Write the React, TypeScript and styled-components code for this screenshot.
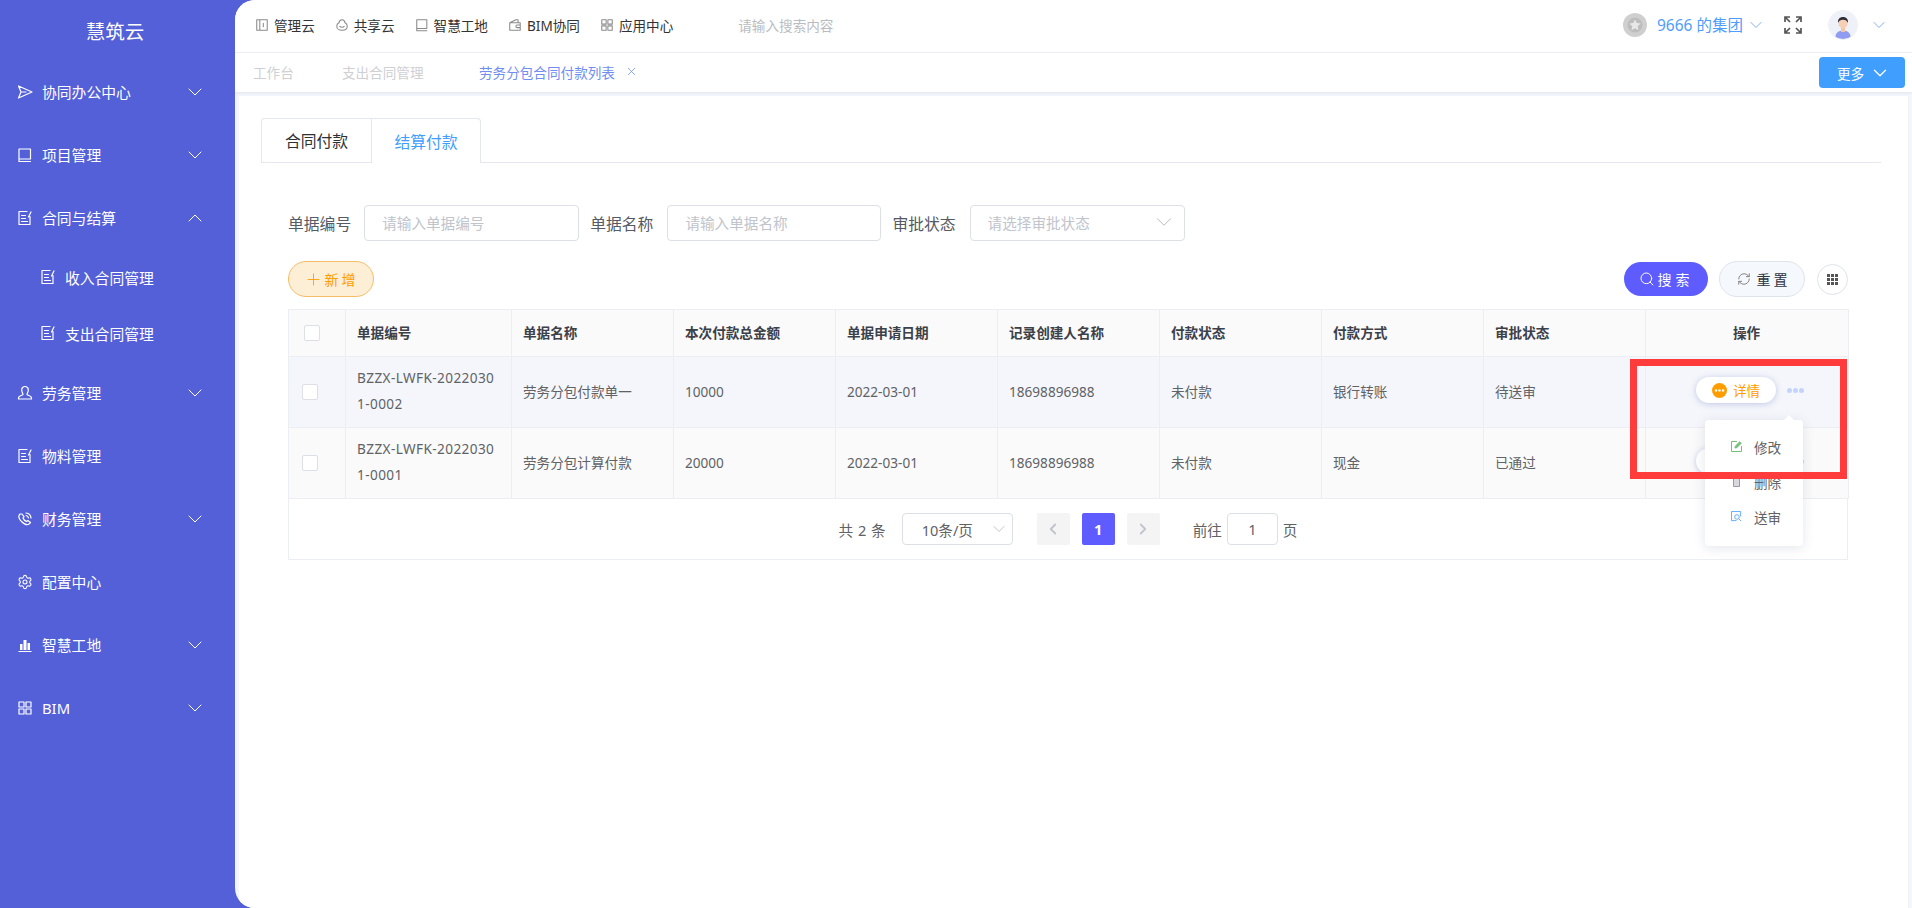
import React from 'react';
import styled, {createGlobalStyle} from 'styled-components';
import {ChevronDown, ChevronLeft, ChevronRight, ChevronUp, Plus, RefreshCw, Search, Settings, X} from 'lucide-react';

const FONT = '"Noto Sans", "Noto Sans CJK SC", sans-serif';

const GlobalStyle = createGlobalStyle`
  html, body { margin: 0; padding: 0; height: 100%; }
  body { font-family: ${FONT}; background: #5460d8; overflow: hidden; }
  * { box-sizing: border-box; }
`;

const Ico: React.FC<{d: string; size?: number; color?: string}> = ({d, size = 16, color = 'currentColor'}) => (
  <svg width={size} height={size} viewBox="0 0 16 16" fill="none" stroke={color} strokeWidth="1.2" strokeLinejoin="round" strokeLinecap="round">
    <path d={d} />
  </svg>
);

const PATHS = {
  send: 'M1.500 2 15 8 1.500 14 4 8ZM4 8h5',
  book: 'M2 2h11.500v10H2ZM2 12v2.500h11.500',
  doc: 'M13 6.500V14.500H2V1.500h8M4.500 5.500h4M4.500 8.500h4M4.500 11.500h6M14 2l-2.500 5',
  user: 'M8 1.500a3.300 3.300 0 0 1 3.300 3.500c0 2-1.300 3.500-1.300 4.500 0 .8 4.500 1 4.500 3.500v1H1.500v-1c0-2.500 4.500-2.700 4.500-3.500 0-1-1.300-2.500-1.300-4.500A3.300 3.300 0 0 1 8 1.500Z',
  phone: 'M3 3c-2 2-1 5 1.500 7.500S10 14.500 12 13l1.500-1.500-2.700-2-1.300 1c-1.500-.6-3-2-3.500-3.500l1-1.300-2-2.700ZM9 2a5.500 5.500 0 0 1 5 5M9 4.500A3 3 0 0 1 11.500 7',
  grid: 'M2 2h5v5H2ZM9 2h5v5H9ZM2 9h5v5H2ZM9 9h5v5H9Z',
  panel: 'M2 2h12v12H2ZM5.500 2v12M9.500 6v4',
  cloud: 'M8 2c2 0 3.200 1.500 3.500 3.500 1.500.8 2.500 2.200 2.500 3.800C14 12 11.500 14 8 14s-6-2-6-4.700c0-1.600 1-3 2.500-3.800C4.800 3.500 6 2 8 2ZM5.500 9.500c1 1.300 4 1.300 5 0',
  wallet: 'M2 5.500 9 2h2.500v3.500M2 5.500V14h12V5.500ZM14 8h-3.500a1.500 1.500 0 0 0 0 3H14',
};

const Down = () => <ChevronDown size={24} strokeWidth={1} />;

const App: React.FC = () => (
  <Shell>
    <GlobalStyle />
    <Sidebar>
      <Brand>慧筑云</Brand>
      <MenuItem><MenuIcon><Ico d={PATHS.send} /></MenuIcon>协同办公中心<MenuArrow><Down /></MenuArrow></MenuItem>
      <MenuItem><MenuIcon><Ico d={PATHS.book} /></MenuIcon>项目管理<MenuArrow><Down /></MenuArrow></MenuItem>
      <MenuItem><MenuIcon><Ico d={PATHS.doc} /></MenuIcon>合同与结算<MenuArrow><ChevronUp size={24} strokeWidth={1} /></MenuArrow></MenuItem>
      <SubItem><MenuIcon><Ico d={PATHS.doc} /></MenuIcon>收入合同管理</SubItem>
      <SubItem><MenuIcon><Ico d={PATHS.doc} /></MenuIcon>支出合同管理</SubItem>
      <MenuItem><MenuIcon><Ico d={PATHS.user} /></MenuIcon>劳务管理<MenuArrow><Down /></MenuArrow></MenuItem>
      <MenuItem><MenuIcon><Ico d={PATHS.doc} /></MenuIcon>物料管理</MenuItem>
      <MenuItem><MenuIcon><Ico d={PATHS.phone} /></MenuIcon>财务管理<MenuArrow><Down /></MenuArrow></MenuItem>
      <MenuItem><MenuIcon><Settings size={16} strokeWidth={1.6} /></MenuIcon>配置中心</MenuItem>
      <MenuItem>
        <MenuIcon>
          <svg width="16" height="16" viewBox="0 0 16 16" fill="#fff"><path d="M3 7h2.500v6H3ZM6.500 3h3v10h-3ZM10.500 6H13v7h-2.500ZM1.500 14h13v1h-13Z" /></svg>
        </MenuIcon>
        智慧工地<MenuArrow><Down /></MenuArrow>
      </MenuItem>
      <MenuItem><MenuIcon><Ico d={PATHS.grid} /></MenuIcon>BIM<MenuArrow><Down /></MenuArrow></MenuItem>
    </Sidebar>

    <Main>
      <TopBar>
        <TopNav>
          <TopLink><Ico d={PATHS.panel} size={14} color="#8a8a8a" />管理云</TopLink>
          <TopLink><Ico d={PATHS.cloud} size={14} color="#8a8a8a" />共享云</TopLink>
          <TopLink><Ico d={PATHS.book} size={14} color="#8a8a8a" />智慧工地</TopLink>
          <TopLink><Ico d={PATHS.wallet} size={14} color="#8a8a8a" />BIM协同</TopLink>
          <TopLink><Ico d={PATHS.grid} size={14} color="#8a8a8a" />应用中心</TopLink>
        </TopNav>
        <TopSearch>请输入搜索内容</TopSearch>
        <TopRight>
          <Medal>
            <svg width="24" height="24" viewBox="0 0 24 24">
              <circle cx="12" cy="12" r="12" fill="#cfcfcf" />
              <circle cx="12" cy="12" r="7.500" fill="#bdbdbd" />
              <path d="m12 6.500 1.700 3.600 3.900.5-2.900 2.700.8 3.900-3.500-2-3.500 2 .8-3.900-2.900-2.700 3.900-.5Z" fill="#e8e8e8" />
            </svg>
          </Medal>
          <OrgName>9666 的集团</OrgName>
          <SoftArrow $gap={3}><ChevronDown size={20} strokeWidth={1} /></SoftArrow>
          <Expand>
            <svg width="18" height="18" viewBox="0 0 18 18" fill="none" stroke="#555" strokeWidth="1.700">
              <path d="M1 6V1h5M1 1l5 5M17 6V1h-5M17 1l-5 5M1 12v5h5M1 17l5-5M17 12v5h-5M17 17l-5-5" />
            </svg>
          </Expand>
          <Avatar>
            <svg width="28" height="28" viewBox="0 0 28 28">
              <circle cx="14" cy="14" r="14" fill="#eef1f8" />
              <path d="M6.500 26c0-4 3-6.500 7.500-6.500s7.500 2.500 7.500 6.500c-2 1.300-4.500 2-7.500 2s-5.500-.7-7.500-2Z" fill="#8f9cf2" />
              <rect x="12" y="15" width="4" height="6" fill="#f3c6a8" />
              <ellipse cx="14" cy="12.500" rx="4.500" ry="5" fill="#f6cfb4" />
              <path d="M9 12c-.5-4 2-6 5-6s5.500 2 5 6c-1-2.500-2.500-3.200-5-3.200S10 9.500 9 12Z" fill="#2f2f35" />
            </svg>
          </Avatar>
          <SoftArrow $gap={11}><ChevronDown size={20} strokeWidth={1} /></SoftArrow>
        </TopRight>
      </TopBar>

      <TabBar>
        <PageTab $w={89}>工作台</PageTab>
        <PageTab $w={137}>支出合同管理</PageTab>
        <PageTab $active>劳务分包合同付款列表<X size={13} strokeWidth={1.4} /></PageTab>
        <MoreButton>更多<ChevronDown size={22} strokeWidth={1.4} /></MoreButton>
      </TabBar>

      <Card>
        <Tabs>
          <TabItem>合同付款</TabItem>
          <TabItem $active>结算付款</TabItem>
        </Tabs>
        <Body>
          <Filters>
            <FilterLabel>单据编号</FilterLabel>
            <Field $w={215}>请输入单据编号</Field>
            <FilterLabel>单据名称</FilterLabel>
            <Field $w={214}>请输入单据名称</Field>
            <FilterLabel>审批状态</FilterLabel>
            <Field $w={215}>请选择审批状态<FieldArrow><ChevronDown size={26} strokeWidth={0.9} /></FieldArrow></Field>
          </Filters>

          <Actions>
            <AddButton><Plus size={19} strokeWidth={1.1} />新增</AddButton>
            <ActionsRight>
              <SearchButton><Search size={16} strokeWidth={1.5} />搜索</SearchButton>
              <ResetButton><RefreshCw size={14} strokeWidth={1.5} color="#777" />重置</ResetButton>
              <GridButton>
                <svg width="11" height="11" viewBox="0 0 11 11" fill="#555">
                  <path d="M0 0h3v3H0ZM4 0h3v3H4ZM8 0h3v3H8ZM0 4h3v3H0ZM4 4h3v3H4ZM8 4h3v3H8ZM0 8h3v3H0ZM4 8h3v3H4ZM8 8h3v3H8Z" />
                </svg>
              </GridButton>
            </ActionsRight>
          </Actions>

          <TableWrap>
            <Table>
              <colgroup>
                <col style={{width: 57}} />
                <col style={{width: 166}} />
                <col style={{width: 162}} />
                <col style={{width: 162}} />
                <col style={{width: 162}} />
                <col style={{width: 162}} />
                <col style={{width: 162}} />
                <col style={{width: 162}} />
                <col style={{width: 162}} />
                <col style={{width: 203}} />
              </colgroup>
              <thead>
                <tr>
                  <Th><Check $head /></Th>
                  <Th>单据编号</Th>
                  <Th>单据名称</Th>
                  <Th>本次付款总金额</Th>
                  <Th>单据申请日期</Th>
                  <Th>记录创建人名称</Th>
                  <Th>付款状态</Th>
                  <Th>付款方式</Th>
                  <Th>审批状态</Th>
                  <Th $center>操作</Th>
                </tr>
              </thead>
              <tbody>
                {ROWS.map((r, i) => (
                  <tr key={r.no}>
                    <Td $alt={i === 0}><Check /></Td>
                    <Td $alt={i === 0}><Code>{r.no}</Code></Td>
                    <Td $alt={i === 0}>{r.name}</Td>
                    <Td $alt={i === 0}>{r.amount}</Td>
                    <Td $alt={i === 0}>2022-03-01</Td>
                    <Td $alt={i === 0}>18698896988</Td>
                    <Td $alt={i === 0}>未付款</Td>
                    <Td $alt={i === 0}>{r.way}</Td>
                    <Td $alt={i === 0}>{r.status}</Td>
                    <Td $alt={i === 0}>
                      <OpCell>
                        <DetailPill>
                          <svg width="15" height="15" viewBox="0 0 15 15">
                            <circle cx="7.500" cy="7.500" r="7.500" fill="#ff9d00" />
                            <circle cx="4" cy="7.500" r="1.200" fill="#fff" />
                            <circle cx="7.500" cy="7.500" r="1.200" fill="#fff" />
                            <circle cx="11" cy="7.500" r="1.200" fill="#fff" />
                          </svg>
                          详情
                        </DetailPill>
                        <MoreDots><i /><i /><i /></MoreDots>
                      </OpCell>
                    </Td>
                  </tr>
                ))}
              </tbody>
            </Table>

            <Pager>
              <PagerText>共 2 条</PagerText>
              <PageSize>10条/页<FieldArrow><ChevronDown size={20} strokeWidth={1} /></FieldArrow></PageSize>
              <PageBtn $ml={24}><ChevronLeft size={18} strokeWidth={2.4} /></PageBtn>
              <PageBtn $ml={12} $active>1</PageBtn>
              <PageBtn $ml={12}><ChevronRight size={18} strokeWidth={2.4} /></PageBtn>
              <PagerGoto>前往</PagerGoto>
              <PageInput>1</PageInput>
              <PagerUnit>页</PagerUnit>
            </Pager>

            <Popup>
              <PopItem>
                <svg width="11" height="11" viewBox="0 0 11 11" fill="none" stroke="#74be7a" strokeWidth="1">
                  <path d="M6 .5H.5v10h10V5" /><path d="m4 7 .3-1.800L8.800.8l1.400 1.400-4.400 4.500Z" fill="#74be7a" />
                </svg>
                修改
              </PopItem>
              <PopItem>
                <svg width="11" height="11" viewBox="0 0 11 11" fill="none" stroke="#9a9aa5" strokeWidth="1">
                  <path d="M2.500 2.500h6v8h-6Z" fill="#d8d8de" /><path d="M1 1.500h9" />
                </svg>
                删除
              </PopItem>
              <PopItem>
                <svg width="11" height="11" viewBox="0 0 12 12" fill="none" stroke="#5aa5f5" strokeWidth="1">
                  <path d="M.5.500h10V6M.5.500v10H6" /><circle cx="6.500" cy="6.500" r="2.500" /><path d="m8.500 8.500 2.500 2.500" />
                </svg>
                送审
              </PopItem>
            </Popup>
            <Highlight />
          </TableWrap>
        </Body>
      </Card>
    </Main>
  </Shell>
);

export default App;

const ROWS = [
  {no: 'BZZX-LWFK-20220301-0002', name: '劳务分包付款单一', amount: '10000', way: '银行转账', status: '待送审'},
  {no: 'BZZX-LWFK-20220301-0001', name: '劳务分包计算付款', amount: '20000', way: '现金', status: '已通过'},
];

const Shell = styled.div`
  display: flex;
  height: 908px;
  width: 1912px;
  background: #5460d8;
`;

const Sidebar = styled.aside`
  width: 235px;
  flex: none;
  color: #fff;
`;

const Brand = styled.div`
  height: 60px;
  padding: 1px 5px 0 0;
  display: flex;
  align-items: center;
  justify-content: center;
  font-size: 19.500px;
`;

const MenuItem = styled.div`
  height: 63px;
  display: flex;
  align-items: center;
  padding: 0 28px 0 17px;
  font-size: 14.800px;
`;

const SubItem = styled(MenuItem)`
  height: 56px;
  padding-left: 40px;
`;

const MenuIcon = styled.span`
  width: 16px;
  height: 16px;
  margin-right: 9px;
  display: inline-flex;
  align-items: center;
  justify-content: center;
`;

const MenuArrow = styled.span`
  margin-left: auto;
  display: inline-flex;
`;

const Main = styled.main`
  flex: 1;
  min-width: 0;
  display: flex;
  flex-direction: column;
  background: #f3f6fc;
  border-radius: 20px 0 0 20px;
  overflow: hidden;
`;

const TopBar = styled.header`
  height: 53px;
  flex: none;
  display: flex;
  align-items: center;
  background: #fff;
  border-bottom: 1px solid #f0f1f4;
  padding: 0 23px 3px 20px;
`;

const TopNav = styled.nav`
  display: flex;
  gap: 20px;
`;

const TopLink = styled.span`
  display: inline-flex;
  align-items: center;
  gap: 5px;
  font-size: 13.600px;
  color: #333;
`;

const TopSearch = styled.span`
  margin-left: 65px;
  font-size: 13.600px;
  color: #b9bcc2;
`;

const TopRight = styled.div`
  margin-left: auto;
  display: flex;
  align-items: center;
`;

const Medal = styled.span`
  display: inline-flex;
  margin-right: 10px;
`;

const OrgName = styled.span`
  font-size: 15.500px;
  color: #4e9dfb;
`;

const SoftArrow = styled.span<{$gap: number}>`
  display: inline-flex;
  margin-left: ${p => p.$gap}px;
  color: #6c9df0;
`;

const Expand = styled.span`
  display: inline-flex;
  margin: 0 26px 0 18px;
`;

const Avatar = styled.span`
  width: 30px;
  height: 30px;
  border-radius: 50%;
  border: 1px solid #eceef2;
  display: inline-flex;
  overflow: hidden;
`;

const TabBar = styled.div`
  height: 39px;
  flex: none;
  display: flex;
  align-items: center;
  background: #fff;
  padding: 0 7px 0 18px;
  box-shadow: 0 1px 3px rgba(0, 0, 0, 0.08);
  position: relative;
`;

const PageTab = styled.span<{$w?: number; $active?: boolean}>`
  width: ${p => (p.$w ? `${p.$w}px` : 'auto')};
  flex: none;
  padding-bottom: 2px;
  font-size: 13.600px;
  color: ${p => (p.$active ? '#6f8ef0' : '#cfd0d4')};
  display: inline-flex;
  align-items: center;
  gap: 10px;
`;

const MoreButton = styled.button`
  margin-left: auto;
  width: 86px;
  height: 31px;
  border: 0;
  border-radius: 4px;
  background: #409eff;
  color: #fff;
  font: 13.600px ${FONT};
  display: flex;
  align-items: center;
  justify-content: center;
  gap: 5px;
  padding: 0 0 0 4px;
`;

const Card = styled.section`
  flex: 1;
  min-height: 0;
  margin: 4px 3px 0 4px;
  padding: 22px 27px 0 22px;
  background: #fff;
  border-right: 1px solid #f0f1f5;
`;

const Tabs = styled.div`
  display: flex;
  height: 45px;
  border-bottom: 1px solid #e4e7ed;
`;

const TabItem = styled.div<{$active?: boolean}>`
  width: ${p => (p.$active ? '109px' : '111px')};
  height: ${p => (p.$active ? '45px' : '44px')};
  display: flex;
  align-items: center;
  justify-content: center;
  font-size: 15.800px;
  color: ${p => (p.$active ? '#409eff' : '#303133')};
  border: 1px solid #e4e7ed;
  border-bottom: 0;
  border-left-width: ${p => (p.$active ? 0 : '1px')};
  border-radius: ${p => (p.$active ? '0 4px 0 0' : '4px 0 0 0')};
  background: #fff;
  position: relative;
`;

const Body = styled.div`
  padding: 42px 33px 0 27px;
`;

const Filters = styled.div`
  display: flex;
  align-items: center;
  height: 36px;
`;

const FilterLabel = styled.span`
  font-size: 15.800px;
  color: #555a64;
  margin-right: 13px;
  & ~ & { margin: 0 14px 0 11px; }
`;

const Field = styled.div<{$w: number}>`
  width: ${p => p.$w}px;
  height: 36px;
  padding: 0 18px 2px 17px;
  display: flex;
  align-items: center;
  justify-content: space-between;
  border: 1px solid #dcdfe6;
  border-radius: 4px;
  background: #fff;
  font-size: 14.600px;
  color: #c0c4cc;
`;

const FieldArrow = styled.span`
  display: inline-flex;
  color: #b4b8c2;
  margin-right: -11px;
`;

const Actions = styled.div`
  display: flex;
  align-items: center;
  height: 36px;
  margin-top: 20px;
`;

const AddButton = styled.button`
  width: 86px;
  height: 36px;
  border-radius: 18px;
  border: 1px solid #f6bd67;
  background: #fdeed6;
  color: #ff9d00;
  font: 14px ${FONT};
  letter-spacing: 3px;
  display: flex;
  align-items: center;
  justify-content: center;
  gap: 2px;
  padding: 0;
`;

const ActionsRight = styled.div`
  margin-left: auto;
  display: flex;
  align-items: center;
`;

const SearchButton = styled.button`
  width: 84px;
  height: 34px;
  border: 0;
  border-radius: 17px;
  background: #5e5cff;
  color: #fff;
  font: 14px ${FONT};
  letter-spacing: 4px;
  display: flex;
  align-items: center;
  justify-content: center;
  gap: 3px;
  padding: 0 0 1px;
`;

const ResetButton = styled.button`
  width: 86px;
  height: 36px;
  margin-left: 11px;
  border: 1px solid #dfe3ec;
  border-radius: 18px;
  background: #f5f8fd;
  color: #2f3440;
  font: 14px ${FONT};
  letter-spacing: 3px;
  display: flex;
  align-items: center;
  justify-content: center;
  gap: 6px;
  padding: 0 0 1px 3px;
`;

const GridButton = styled.button`
  width: 31px;
  height: 31px;
  margin-left: 12px;
  border: 1px solid #dfe3ec;
  border-radius: 50%;
  background: #fff;
  display: flex;
  align-items: center;
  justify-content: center;
  padding: 0;
`;

const TableWrap = styled.div`
  position: relative;
  margin-top: 12px;
  width: 1560px;
`;

const Table = styled.table`
  width: 1560px;
  table-layout: fixed;
  border-collapse: collapse;
  font-size: 13.600px;
`;

const Th = styled.th<{$center?: boolean}>`
  height: 47px;
  padding: 0 12px 2px 11px;
  background: #fafafa;
  border: 1px solid #ebeef3;
  text-align: ${p => (p.$center ? 'center' : 'left')};
  font-weight: 600;
  color: #3c4048;
  position: relative;
`;

const Td = styled.td<{$alt?: boolean}>`
  height: 71px;
  padding: 0 12px 2px 11px;
  background: ${p => (p.$alt ? '#f5f6fb' : '#fafafa')};
  border: 1px solid #ebeef3;
  color: #606266;
`;

const Check = styled.span<{$head?: boolean}>`
  display: block;
  width: 16px;
  height: 16px;
  margin: 2px 0 0 ${p => (p.$head ? '4px' : '2px')};
  background: #fff;
  border: 1px solid #dcdfe6;
  border-radius: 2px;
`;

const Code = styled.div`
  line-height: 26px;
  word-break: break-all;
  letter-spacing: 0.4px;
  width: 140px;
`;

const OpCell = styled.div`
  display: flex;
  align-items: center;
  padding-left: 39px;
  margin-top: -2px;
`;

const DetailPill = styled.span`
  width: 80px;
  height: 26px;
  flex: none;
  border-radius: 13px;
  background: #fff;
  box-shadow: 0 1px 6px rgba(90, 110, 190, 0.35);
  color: #ff9d00;
  font-size: 13.600px;
  display: flex;
  align-items: center;
  justify-content: center;
  gap: 6px;
`;

const MoreDots = styled.span`
  display: flex;
  gap: 1px;
  margin-left: 11px;
  i { width: 5px; height: 5px; border-radius: 50%; background: #c3d4fb; }
`;

const Pager = styled.div`
  height: 61px;
  display: flex;
  align-items: center;
  justify-content: center;
  border: 1px solid #ebeef3;
  border-top: 0;
  font-size: 14.600px;
  color: #606266;
`;

const PagerText = styled.span`
  margin-right: 16px;
  word-spacing: 1px;
`;

const PageSize = styled.div`
  width: 111px;
  height: 32px;
  padding: 0 14px 0 19px;
  display: flex;
  align-items: center;
  justify-content: space-between;
  border: 1px solid #dcdfe6;
  border-radius: 4px;
`;

const PageBtn = styled.span<{$ml: number; $active?: boolean}>`
  width: 33px;
  height: 32px;
  margin-left: ${p => p.$ml}px;
  display: flex;
  align-items: center;
  justify-content: center;
  border-radius: 2px;
  font-weight: 700;
  background: ${p => (p.$active ? '#5e5cff' : '#f4f4f5')};
  color: ${p => (p.$active ? '#fff' : '#c0c4cc')};
`;

const PagerGoto = styled.span`
  margin-left: 33px;
`;

const PageInput = styled.div`
  width: 51px;
  height: 32px;
  margin: 0 5px;
  display: flex;
  align-items: center;
  justify-content: center;
  border: 1px solid #dcdfe6;
  border-radius: 4px;
`;

const PagerUnit = styled.span``;

const Popup = styled.div`
  position: absolute;
  left: 1417px;
  top: 111px;
  width: 98px;
  height: 126px;
  padding: 9px 0 0 26px;
  background: #fff;
  border-radius: 4px;
  box-shadow: 0 2px 12px rgba(60, 70, 110, 0.14);
  &::before {
    content: '';
    position: absolute;
    left: 79px;
    top: -5px;
    width: 0;
    height: 0;
    border: 5px solid transparent;
    border-top: 0;
    border-bottom-color: #fff;
  }
`;

const PopItem = styled.div`
  height: 35px;
  display: flex;
  align-items: center;
  gap: 12px;
  font-size: 13.600px;
  color: #606266;
`;

const Highlight = styled.div`
  position: absolute;
  left: 1342px;
  top: 50px;
  width: 217px;
  height: 120px;
  border: 7px solid #ff3b3b;
  pointer-events: none;
`;
